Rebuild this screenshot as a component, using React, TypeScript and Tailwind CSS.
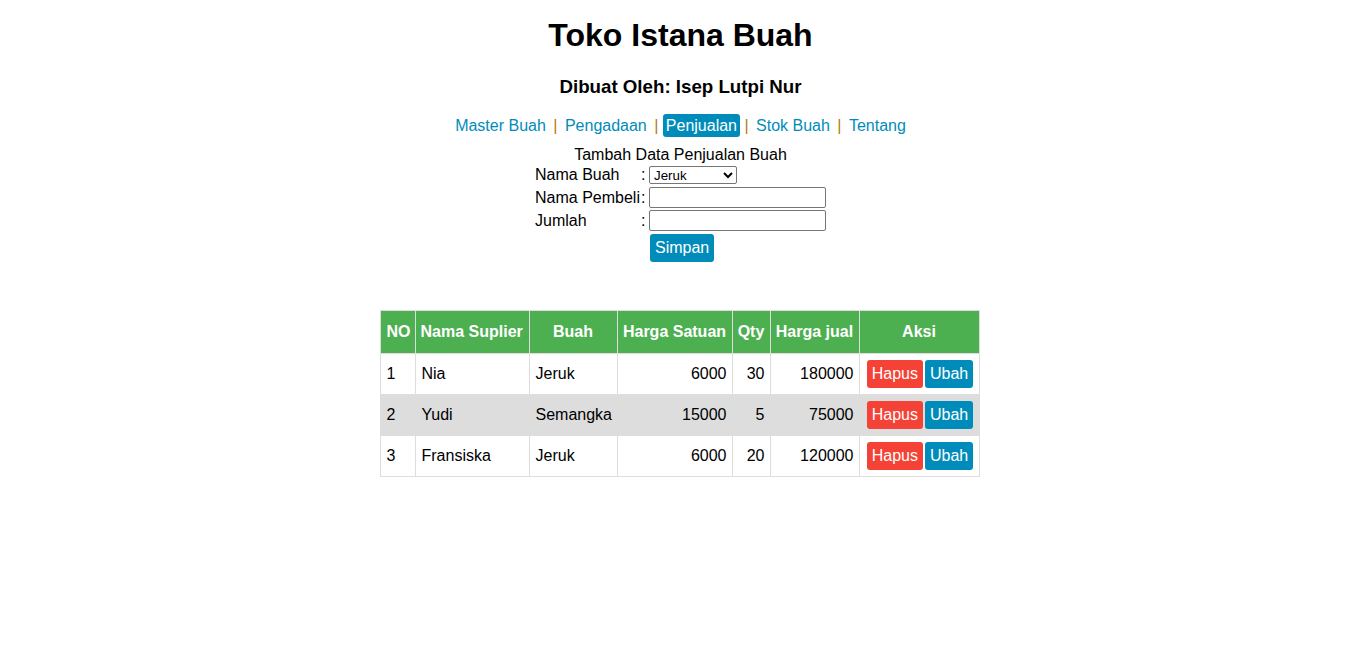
import React from 'react';

const rows = [
  { no: 1, nama: 'Nia', buah: 'Jeruk', harga: 6000, qty: 30, jual: 180000 },
  { no: 2, nama: 'Yudi', buah: 'Semangka', harga: 15000, qty: 5, jual: 75000 },
  { no: 3, nama: 'Fransiska', buah: 'Jeruk', harga: 6000, qty: 20, jual: 120000 },
];

const menu = ['Master Buah', 'Pengadaan', 'Penjualan', 'Stok Buah', 'Tentang'];

export default function App() {
  return (
    <div className="min-h-[657px] bg-white text-black text-[16px] font-['Liberation_Sans',Arial,sans-serif]">
      <h1 className="pt-[17px] text-center text-[32px] leading-[37px] font-bold">Toko Istana Buah</h1>
      <h3 className="mt-[22px] text-center text-[18.72px] leading-[21.5px] font-bold">Dibuat Oleh: Isep Lutpi Nur</h3>

      <div className="mt-[16px] text-center leading-[23px] whitespace-pre">
        {menu.map((m, i) => (
          <React.Fragment key={m}>
            {i > 0 && <span className="text-[#b07a12]"> | </span>}
            <a
              href="#"
              className={
                m === 'Penjualan'
                  ? 'inline-block px-[3px] rounded-[3px] bg-[#008cba] text-white'
                  : 'inline-block px-[3px] text-[#008cba]'
              }
            >
              {m}
            </a>
          </React.Fragment>
        ))}
      </div>

      {/* form tambah data */}
      <div className="mt-[9px] flex justify-center">
        <div className="w-[291px]">
          <div className="text-center leading-[18px]">Tambah Data Penjualan Buah</div>
          <div className="mt-[2px] grid grid-cols-[106px_8px_177px] gap-y-[2px] items-center leading-[18px]">
            <div className="h-[19px]">Nama Buah</div>
            <div className="h-[19px]">:</div>
            <div className="h-[19px]">
              <select className="w-[88px] h-[18px] text-[13.33px] border border-[#767676] rounded-[2px] bg-white" defaultValue="Jeruk">
                <option>Jeruk</option>
                <option>Semangka</option>
                <option>Apel</option>
              </select>
            </div>
            <div className="h-[21px] leading-[21px]">Nama Pembeli</div>
            <div className="h-[21px] leading-[21px]">:</div>
            <input className="w-[177px] h-[21px] border border-[#767676] rounded-[2px]" />
            <div className="h-[21px] leading-[21px]">Jumlah</div>
            <div className="h-[21px] leading-[21px]">:</div>
            <input className="w-[177px] h-[21px] border border-[#767676] rounded-[2px]" />
            <div />
            <div />
            <div className="pt-[1px] pl-[1px]">
              <button className="h-[28px] px-[5px] rounded-[3px] bg-[#008cba] text-white">Simpan</button>
            </div>
          </div>
        </div>
      </div>

      {/* tabel penjualan */}
      <div className="mt-[48px] pr-[2px] flex justify-center">
        <table className="w-[599px] border-collapse table-fixed">
          <colgroup>
            <col className="w-[35px]" />
            <col className="w-[114px]" />
            <col className="w-[88px]" />
            <col className="w-[115px]" />
            <col className="w-[38px]" />
            <col className="w-[89px]" />
            <col className="w-[120px]" />
          </colgroup>
          <thead>
            <tr className="h-[43px] bg-[#4caf50] text-white font-bold">
              <th className="border border-[#ddd] px-[6px] text-center">NO</th>
              <th className="border border-[#ddd] px-[5px] text-left whitespace-nowrap">Nama Suplier</th>
              <th className="border border-[#ddd] px-[6px] text-center">Buah</th>
              <th className="border border-[#ddd] px-[4px] text-center whitespace-nowrap">Harga Satuan</th>
              <th className="border border-[#ddd] px-[4px] text-center">Qty</th>
              <th className="border border-[#ddd] px-[4px] text-center whitespace-nowrap">Harga jual</th>
              <th className="border border-[#ddd] px-[6px] text-center">Aksi</th>
            </tr>
          </thead>
          <tbody>
            {rows.map((r, i) => (
              <tr key={r.no} className={i % 2 === 1 ? 'h-[41px] bg-[#dddddd]' : 'h-[41px] bg-white'}>
                <td className="border border-[#ddd] pl-[6px] pr-[4px]">{r.no}</td>
                <td className="border border-[#ddd] pl-[6px] pr-[4px]">{r.nama}</td>
                <td className="border border-[#ddd] pl-[6px] pr-[4px]">{r.buah}</td>
                <td className="border border-[#ddd] px-[5px] text-right">{r.harga}</td>
                <td className="border border-[#ddd] px-[5px] text-right">{r.qty}</td>
                <td className="border border-[#ddd] px-[5px] text-right">{r.jual}</td>
                <td className="border border-[#ddd] pl-[7px] pr-[5px]">
                  <div className="flex justify-center gap-[2px]">
                    <button className="h-[28px] px-[5px] rounded-[3px] bg-[#f44336] text-white">Hapus</button>
                    <button className="h-[28px] px-[5px] rounded-[3px] bg-[#008cba] text-white">Ubah</button>
                  </div>
                </td>
              </tr>
            ))}
          </tbody>
        </table>
      </div>
    </div>
  );
}
